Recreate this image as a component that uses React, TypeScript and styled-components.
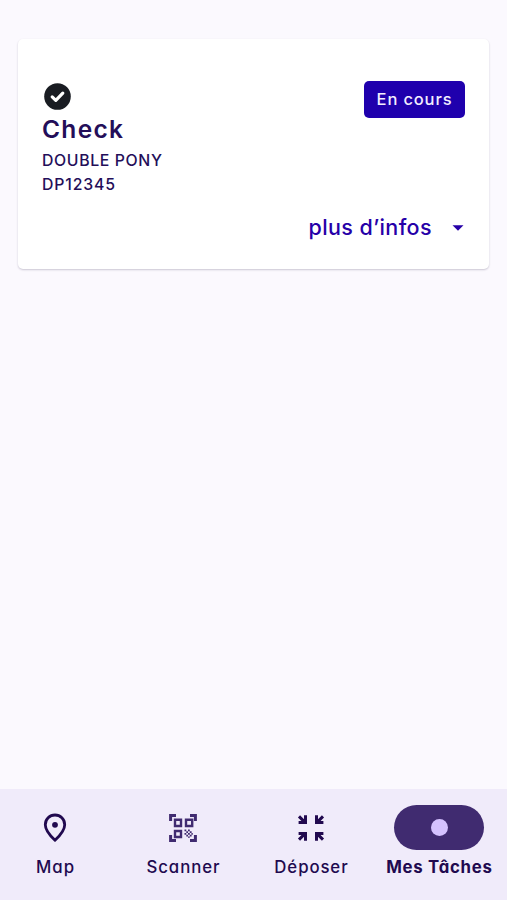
import React from "react";
import styled, { createGlobalStyle } from "styled-components";

const GlobalStyle = createGlobalStyle`
  * { box-sizing: border-box; }
  html, body { margin: 0; background: #fbf9fe; }
  body {
    font-family: Inter, "Open Sans", sans-serif;
    font-feature-settings: "cv11";
    color: #240e59;
    overflow: hidden;
  }
  button { font: inherit; font-feature-settings: inherit; border: 0; background: none; padding: 0; }
`;

const Screen = styled.div`
  width: 507px;
  height: 900px;
  display: flex;
  flex-direction: column;
  overflow: hidden;
`;

const Content = styled.main`
  flex: 1;
  padding: 39px 18px 0;
`;

const Card = styled.article`
  height: 230px;
  padding: 42px 24px 0;
  border-radius: 5px;
  background: #fff;
  box-shadow: 0 1px 2px rgba(30, 20, 60, 0.22);
`;

const CardTop = styled.div`
  display: flex;
  justify-content: space-between;
  align-items: flex-start;
  height: 128px;
`;

const Summary = styled.div`
  display: flex;
  flex-direction: column;
  svg { display: block; margin: 2px 0 0 2px; }
`;

const Title = styled.h1`
  margin: 1px 0 2px;
  font-size: 24.5px;
  line-height: 36px;
  font-weight: 600;
  letter-spacing: 1.3px;
`;

const Detail = styled.span<{ $spacing: number }>`
  font-size: 15.8px;
  line-height: 24px;
  font-weight: 500;
  letter-spacing: ${(p) => p.$spacing}px;
`;

const Badge = styled.span`
  width: 101px;
  height: 37px;
  border-radius: 5px;
  background: #1f00ad;
  color: #f3eeff;
  font-size: 16.5px;
  line-height: 36px;
  font-weight: 500;
  text-align: center;
  letter-spacing: 0.85px;
`;

const More = styled.button`
  display: flex;
  align-items: center;
  gap: 20px;
  height: 36px;
  margin: 0 1px 0 auto;
  color: #2600a8;
  span { font-size: 21.5px; font-weight: 500; letter-spacing: 0.4px; }
  svg { margin-top: 2px; }
`;

const Nav = styled.nav`
  display: flex;
  height: 111px;
  margin-left: -9px;
  padding-top: 16px;
  background: #f0ebfa;
`;

const NavItem = styled.button`
  flex: 0 0 128px;
  display: flex;
  flex-direction: column;
  align-items: center;
  color: #21094f;
`;

const Indicator = styled.span<{ $active?: boolean }>`
  display: grid;
  place-items: center;
  width: 90px;
  height: 45px;
  border-radius: 23px;
  background: ${(p) => (p.$active ? "#402b70" : "transparent")};
`;

const Dot = styled.span`
  width: 17px;
  height: 17px;
  border-radius: 50%;
  background: #d5c2ff;
`;

const Label = styled.span<{ $bold?: boolean; $spacing: number }>`
  margin-top: 4px;
  font-size: 16.8px;
  line-height: 26px;
  font-weight: ${(p) => (p.$bold ? 700 : 500)};
  letter-spacing: ${(p) => p.$spacing}px;
  margin-right: ${(p) => -p.$spacing}px;
  white-space: nowrap;
`;

const CheckIcon = () => (
  <svg width="27" height="27" viewBox="0 0 27 27" fill="none">
    <circle cx="13.5" cy="13.5" r="13.3" fill="#191c22" />
    <path d="m8.2 13.9 3.6 3.5 7-7.2" stroke="#fff" strokeWidth="3.2" strokeLinecap="round" strokeLinejoin="round" />
  </svg>
);

const PinIcon = () => (
  <svg width="24" height="30" viewBox="0 0 24 30" fill="none">
    <path d="M12 27.2C8 23.5 2.3 18 2.3 11.7a9.7 9.7 0 0 1 19.4 0C21.7 18 16 23.5 12 27.2Z" stroke="currentColor" strokeWidth="2.8" />
    <circle cx="12" cy="11.8" r="2.9" fill="currentColor" />
  </svg>
);

const ScanIcon = () => (
  <svg width="28" height="28" viewBox="0 0 28 28" fill="none" stroke="#402b70">
    <path d="M1.6 7V1.6H7M21 1.6h5.4V7M1.6 21v5.4H7M21 26.4h5.4V21" strokeWidth="3" />
    <path d="M6 5.8h6v6.2H6zM17 5.8h6.2v6.2H17zM6 17h6v6H6z" strokeWidth="2.4" />
    <path
      d="M15.5 15.5h1.8v1.8h-1.8zM19 15.5h1.8v1.8H19zM17.3 17.3H19V19h-1.7zM20.8 17.3h1.8V19h-1.8zM15.5 19h1.8v1.8h-1.8zM19 19h1.8v1.8H19zM17.3 20.8H19v1.8h-1.7zM20.8 20.8h1.8v1.8h-1.8zM22.4 19h1.4v1.7h-1.4zM19 22.4h1.8v1.4H19z"
      fill="#402b70"
      stroke="none"
    />
  </svg>
);

const ConvergeIcon = () => (
  <svg width="28" height="28" viewBox="0 0 28 28" fill="none" stroke="currentColor" strokeWidth="3">
    <path d="m2 2.4 6 6M8.5 1.2v7.3H1.6M26 2.4l-6 6M19.5 1.2v7.3h6.9M2 25.6l6-6M8.5 26.8v-7.3H1.6M26 25.6l-6-6M19.5 26.8v-7.3h6.9" />
  </svg>
);

export default function App() {
  return (
    <Screen>
      <GlobalStyle />
      <Content>
        <Card>
          <CardTop>
            <Summary>
              <CheckIcon />
              <Title>Check</Title>
              <Detail $spacing={0.65}>DOUBLE PONY</Detail>
              <Detail $spacing={0.85}>DP12345</Detail>
            </Summary>
            <Badge>En cours</Badge>
          </CardTop>
          <More>
            <span>plus d’infos</span>
            <svg width="12" height="6" viewBox="0 0 12 6">
              <path d="M.5.2h11L6 5.8Z" fill="currentColor" />
            </svg>
          </More>
        </Card>
      </Content>
      <Nav>
        <NavItem>
          <Indicator><PinIcon /></Indicator>
          <Label $spacing={1}>Map</Label>
        </NavItem>
        <NavItem>
          <Indicator><ScanIcon /></Indicator>
          <Label $spacing={0.95}>Scanner</Label>
        </NavItem>
        <NavItem>
          <Indicator><ConvergeIcon /></Indicator>
          <Label $spacing={0.9}>Déposer</Label>
        </NavItem>
        <NavItem>
          <Indicator $active><Dot /></Indicator>
          <Label $bold $spacing={0.72}>Mes Tâches</Label>
        </NavItem>
      </Nav>
    </Screen>
  );
}
